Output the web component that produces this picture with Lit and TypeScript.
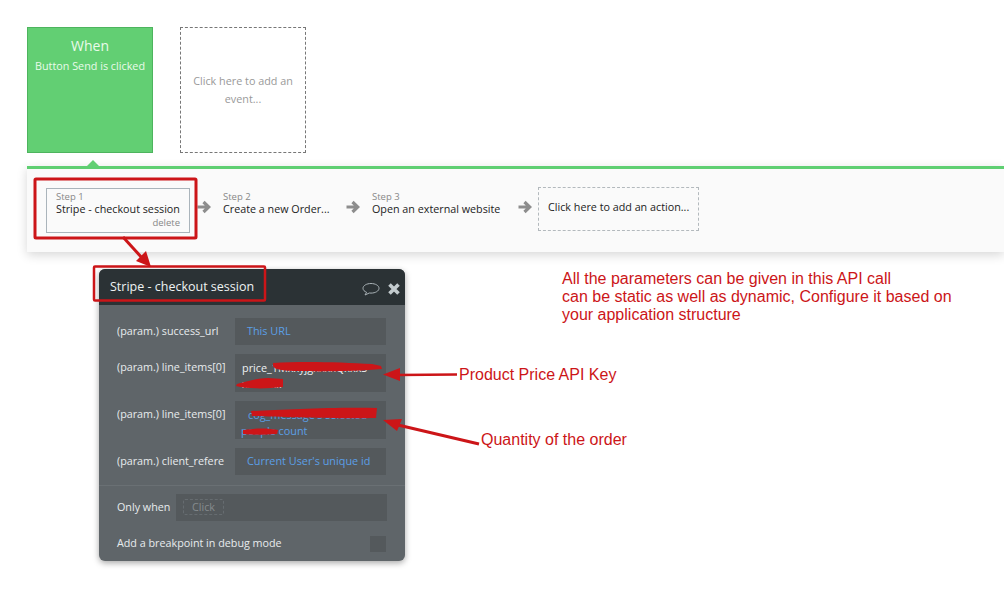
import { LitElement, html, css, svg } from "lit";
import { customElement } from "lit/decorators.js";

const arrowIcon = html`<svg class="go" width="14" height="14" viewBox="0 0 14 14"><path d="M0.5 7H11M6.5 2L11.8 7L6.5 12" fill="none" stroke="#8d8d8d" stroke-width="3.2"/></svg>`;

const RED = "#cc1518";

@customElement("app-root")
export class AppRoot extends LitElement {
  static styles = css`
    :host { display: block; position: relative; width: 1004px; height: 597px; overflow: hidden; background: #fff; font-family: "Open Sans", sans-serif; color: #222; }
    .events { display: flex; gap: 27px; padding: 27px 0 0 27px; }
    .card { box-sizing: border-box; width: 126px; height: 126px; text-align: center; }
    .when { background: #62cf73; border: 1px solid #4db45e; color: #e9fbea; padding-top: 8px; }
    .when .t { font-size: 14px; line-height: 19px; }
    .when .s { font-size: 10.8px; line-height: 15px; margin-top: 3px; }
    .add-ev { border: 1px dashed #777; color: #999; font-size: 10.8px; line-height: 18px; padding: 44px 6px 0; }
    .bar { position: relative; box-sizing: border-box; margin: 13px 0 0 27px; height: 86px; background: #fafafa; border-top: 3px solid #5fcf72; box-shadow: 0 3px 10px rgba(0,0,0,.16); display: flex; align-items: flex-start; font-size: 10.75px; }
    .notch { position: absolute; left: 60px; top: -9px; width: 0; height: 0; border-left: 6px solid transparent; border-right: 6px solid transparent; border-bottom: 6px solid #62cf73; }
    .step { box-sizing: border-box; color: #222; line-height: 15px; white-space: nowrap; }
    .step small { display: block; font-size: 9.5px; line-height: 11px; color: #888; }
    .s1 { width: 144px; height: 45px; margin: 19px 7px 0 19px; border: 1px solid #aab4bb; padding: 2px 9px 0; }
    .s1 .del { display: block; text-align: right; font-size: 9.5px; color: #888; line-height: 13px; margin-top: -1px; }
    .go { flex: none; margin-top: 31px; }
    .s2 { margin: 22px 0 0 12px; width: 123px; }
    .s3 { margin: 22px 0 0 12px; width: 146px; }
    .add-act { box-sizing: border-box; width: 161px; height: 44px; margin: 18px 0 0 6px; border: 1px dashed #b3b9bd; padding: 11px 9px 0; line-height: 16px; white-space: nowrap; }
    .panel { box-sizing: border-box; width: 306px; height: 292px; margin: 17px 0 0 99px; border-radius: 6px; overflow: hidden; background: #5f6569; box-shadow: 0 2px 6px rgba(0,0,0,.35); color: #e8ecee; font-size: 10.75px; }
    .head { height: 36px; background: #2b3235; display: flex; align-items: center; padding: 0 5px 0 11px; font-size: 12.5px; color: #eef2f3; }
    .head .name { flex: 1; margin-top: -2px; }
    .head svg { flex: none; margin-left: 8px; margin-top: 3px; }
    .rows { display: flex; flex-direction: column; gap: 9px; padding: 13px 19px 10px 18px; border-bottom: 1px solid #6a7074; }
    .row { display: flex; }
    .label { width: 118px; flex: none; line-height: 16px; padding-top: 5px; white-space: nowrap; overflow: hidden; }
    .field { box-sizing: border-box; width: 151px; min-height: 27px; background: #54595c; color: #5b9fe6; font-size: 10.85px; line-height: 16px; padding: 5px 6px 6px 12px; white-space: nowrap; overflow: hidden; }
    .field.tall { height: 38px; padding: 6px 6px 0 7px; line-height: 15.5px; }
    .field.tall.ind { padding-left: 13px; }
    .field .line2 { display: block; }
    .field.ind .line2 { margin-left: -7px; }
    .field.white { color: #eef2f3; }
    .only { display: flex; align-items: center; padding: 8px 18px 0 18px; }
    .only .lb { width: 59px; flex: none; margin-top: -1px; }
    .only .box { box-sizing: border-box; width: 211px; height: 27px; background: #54595c; padding: 5px 7px; }
    .only .click { box-sizing: border-box; display: block; width: 41px; height: 16px; border: 1px dashed #666c70; border-radius: 2px; color: #868b8e; text-align: center; line-height: 14px; }
    .brk { display: flex; align-items: center; justify-content: space-between; padding: 15px 19px 0 18px; }
    .brk span { margin-top: -2px; }
    .brk i { display: block; width: 16px; height: 16px; background: #54595c; }
    .note { position: absolute; font-family: "Liberation Sans", sans-serif; color: #cc1518; font-size: 16px; line-height: 18px; white-space: nowrap; }
    .n-all { left: 562px; top: 270px; }
    .n-key { left: 459px; top: 366px; }
    .n-qty { left: 481px; top: 431px; }
    .ink { position: absolute; left: 0; top: 0; pointer-events: none; }
  `;

  render() {
    return html`
      <div class="events">
        <div class="card when"><div class="t">When</div><div class="s">Button Send is clicked</div></div>
        <div class="card add-ev">Click here to add an event...</div>
      </div>
      <div class="bar">
        <div class="notch"></div>
        <div class="step s1"><small>Step 1</small>Stripe - checkout session<span class="del">delete</span></div>
        ${arrowIcon}
        <div class="step s2"><small>Step 2</small>Create a new Order...</div>
        ${arrowIcon}
        <div class="step s3"><small>Step 3</small>Open an external website</div>
        ${arrowIcon}
        <div class="add-act">Click here to add an action...</div>
      </div>
      <div class="panel">
        <div class="head">
          <span class="name">Stripe - checkout session</span>
          <svg width="18" height="14" viewBox="0 0 18 14"><path d="M9 1.5C4.6 1.5 1 3.6 1 6.3C1 8.1 2.5 9.5 4.6 10.3L3 13L7.3 11C7.9 11.1 8.4 11.1 9 11.1C13.4 11.1 17 9 17 6.3C17 3.6 13.4 1.5 9 1.5Z" fill="none" stroke="#a9b2b6" stroke-width="1"/></svg>
          <svg width="12" height="12" viewBox="0 0 12 12"><path d="M1.5 1.5L10.5 10.5M10.5 1.5L1.5 10.5" stroke="#c3cbce" stroke-width="3.6"/></svg>
        </div>
        <div class="rows">
          <div class="row"><div class="label">(param.) success_url</div><div class="field">This URL</div></div>
          <div class="row"><div class="label">(param.) line_items[0]</div><div class="field tall white">price_1MxxyjgxxxxQxxxS<span class="line2">xxxxxx..</span></div></div>
          <div class="row"><div class="label">(param.) line_items[0]</div><div class="field tall ind">cog_message's selected<span class="line2">people count</span></div></div>
          <div class="row"><div class="label">(param.) client_refere</div><div class="field">Current User's unique id</div></div>
        </div>
        <div class="only"><span class="lb">Only when</span><div class="box"><span class="click">Click</span></div></div>
        <div class="brk"><span>Add a breakpoint in debug mode</span><i></i></div>
      </div>
      <div class="note n-all">All the parameters can be given in this API call<br>can be static as well as dynamic, Configure it based on<br>your application structure</div>
      <div class="note n-key">Product Price API Key</div>
      <div class="note n-qty">Quantity of the order</div>
      <svg class="ink" width="1004" height="597" viewBox="0 0 1004 597">
        ${svg`
        <rect x="35" y="179" width="161" height="59" rx="1" fill="none" stroke=${RED} stroke-width="3"/>
        <rect x="94" y="266.5" width="171" height="34" rx="1" fill="none" stroke=${RED} stroke-width="2.5"/>
        <path d="M123 237L143 259" stroke=${RED} stroke-width="3"/>
        <path d="M151 267L136 261L146 251Z" fill=${RED}/>
        <path d="M457 374.5L398 375" stroke=${RED} stroke-width="2.5"/>
        <path d="M383 374.5L400 368V381Z" fill=${RED}/>
        <path d="M479 444L398 425" stroke=${RED} stroke-width="3"/>
        <path d="M383 420L402 419L397 431Z" fill=${RED}/>
        <path d="M273 363C300 361 340 362 372 364L381 366L382 369C360 371 320 372 300 371C285 371 274 370 273 366Z" fill=${RED}/>
        <path d="M237 384C250 381 258 378 268 378L283 379V387C265 389 248 389 236 386Z" fill=${RED}/>
        <path d="M251 411C280 410 330 407 377 408L376 418C340 419 280 417 252 416Z" fill=${RED}/>
        <path d="M243 430C255 428 268 428 278 430L277 434C265 435 255 435 243 434Z" fill=${RED}/>
        `}
      </svg>
    `;
  }
}
